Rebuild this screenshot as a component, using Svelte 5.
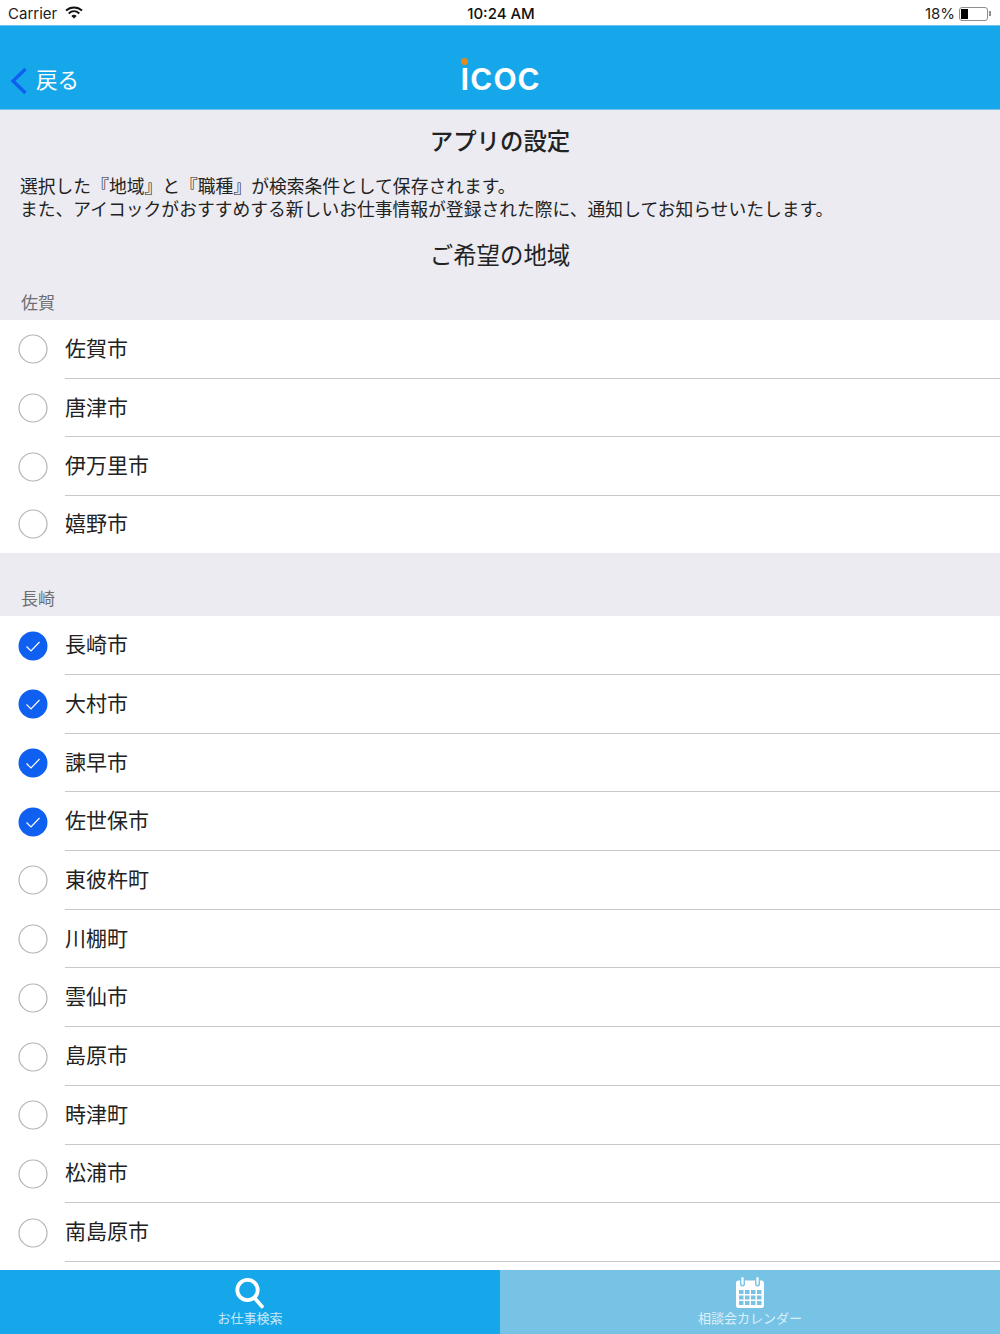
<script>
  const saga = [['佐賀市',false],['唐津市',false],['伊万里市',false],['嬉野市',false]];
  const nagasaki = [['長崎市',true],['大村市',true],['諫早市',true],['佐世保市',true],['東彼杵町',false],['川棚町',false],['雲仙市',false],['島原市',false],['時津町',false],['松浦市',false],['南島原市',false]];
  const groups = [{ name:'佐賀', rows:saga, last:false, cls:'saga' },{ name:'長崎', rows:nagasaki, last:true, cls:'naga' }];
</script>

<div class="page">
  <div class="status">
    <div class="st-left">
      <span>Carrier</span>
      <svg width="18" height="13" viewBox="0 0 18 13" class="wifi"><path d="M1 4.6C5.6.4 12.4.4 17 4.6" fill="none" stroke="#111" stroke-width="2"/><path d="M3.7 7.4c3.2-2.8 7.4-2.8 10.6 0" fill="none" stroke="#111" stroke-width="2"/><path d="M6.3 9.9c1.7-1.4 3.7-1.4 5.4 0L9 12.6z" fill="#111"/></svg>
    </div>
    <div class="st-time">10:24 AM</div>
    <div class="st-right">
      <span>18%</span>
      <span class="batt"><span class="fill"></span></span>
      <span class="nub"></span>
    </div>
  </div>

  <div class="nav">
    <div class="back">
      <svg width="18" height="28" viewBox="0 0 18 28"><path d="M15.5 2 3 14l12.5 12" fill="none" stroke="#0f5ff0" stroke-width="3.4"/></svg>
      <span>戻る</span>
    </div>
    <div class="logo"><span class="dot"></span>ıcoc</div>
  </div>

  <div class="content">
    <h1>アプリの設定</h1>
    <p class="intro">選択した『地域』と『職種』が検索条件として保存されます。<br>また、アイコックがおすすめする新しいお仕事情報が登録された際に、通知してお知らせいたします。</p>
    <h2>ご希望の地域</h2>

    {#each groups as g}
      <div class="sec {g.cls}">{g.name}</div>
      <ul class:tail={g.last}>
        {#each g.rows as [label, on], i}
          <li class:noline={!g.last && i === g.rows.length - 1}>
            {#if on}
              <svg class="radio" width="30" height="30" viewBox="0 0 30 30"><circle cx="15" cy="15" r="14.5" fill="#0f5ff0"/><path d="M8.5 15.5l4.5 4.5 8.5-9" fill="none" stroke="#fff" stroke-width="1.2"/></svg>
            {:else}
              <svg class="radio" width="30" height="30" viewBox="0 0 30 30"><circle cx="15" cy="15" r="14" fill="#fff" stroke="#b4b4b6" stroke-width="1.2"/></svg>
            {/if}
            <div class="label"><span>{label}</span></div>
          </li>
        {/each}
      </ul>
    {/each}
  </div>

  <div class="tabs">
    <div class="tab active">
      <svg width="32" height="32" viewBox="0 0 32 32"><circle cx="13.5" cy="13" r="10.2" fill="none" stroke="#fff" stroke-width="3.8"/><path d="M20.5 21 28 29.5" stroke="#fff" stroke-width="3.6" stroke-linecap="round"/></svg>
      <span>お仕事検索</span>
    </div>
    <div class="tab idle">
      <svg width="32" height="32" viewBox="0 0 32 32"><rect x="2" y="3.5" width="28" height="27.5" rx="2.5" fill="#fff"/><g fill="#76c3e6"><rect x="5" y="13" width="4.5" height="4"/><rect x="11" y="13" width="4.5" height="4"/><rect x="17" y="13" width="4.5" height="4"/><rect x="23" y="13" width="4.5" height="4"/><rect x="5" y="18.5" width="4.5" height="4"/><rect x="11" y="18.5" width="4.5" height="4"/><rect x="17" y="18.5" width="4.5" height="4"/><rect x="23" y="18.5" width="4.5" height="4"/><rect x="5" y="24" width="4.5" height="4"/><rect x="11" y="24" width="4.5" height="4"/><rect x="17" y="24" width="4.5" height="4"/><rect x="23" y="24" width="4.5" height="4"/><rect x="6" y="2" width="5" height="7.5" rx="2.5"/><rect x="21" y="2" width="5" height="7.5" rx="2.5"/></g><rect x="7.4" y="0" width="2.2" height="8" rx="1.1" fill="#fff"/><rect x="22.4" y="0" width="2.2" height="8" rx="1.1" fill="#fff"/></svg>
      <span>相談会カレンダー</span>
    </div>
  </div>
</div>

<style>
  :global(body) { margin: 0; }
  .page {
    width: 1000px; height: 1334px; display: flex; flex-direction: column; overflow: hidden;
    background: #ebebf1; color: #222;
    font-family: "Noto Sans CJK JP", "Liberation Sans", sans-serif;
  }
  .status {
    background: #fff; display: grid; grid-template-columns: 1fr auto 1fr; align-items: center;
    padding: 2px 8px 0 8px; box-sizing: border-box; font-family: "Inter", "Liberation Sans", sans-serif; font-size: 15px; color: #222;
    border-bottom: 1px solid #6fc0ea; height: 26px; flex: none;
  }
  .st-left { display: flex; align-items: center; gap: 8px; }
  .wifi { margin-top: -3px; }
  .st-time { font-weight: 500; color: #111; padding-left: 2px; }
  .st-right { display: flex; align-items: center; justify-content: flex-end; gap: 4px; }
  .batt { height: 14px; width: 29px; border: 1px solid #8e8e8e; border-radius: 3px; padding: 1px; display: block; box-sizing: border-box; }
  .fill { display: block; width: 7px; height: 100%; background: #000; }
  .nub { width: 2px; height: 5px; background: #8e8e8e; margin-left: -3px; margin-right: 1px; }

  .nav {
    height: 83px; background: #16a7ea; position: relative; display: flex; align-items: flex-end; justify-content: center;
    border-bottom: 1px solid #6fc0ea; flex: none;
  }
  .back { position: absolute; left: 10px; bottom: 14px; display: flex; align-items: center; gap: 8px; color: #fff; font-size: 21.5px; line-height: 28px; }
  .back svg { margin-top: 4px; }
  .logo {
    position: relative; color: #fff; font-family: "Inter", "Liberation Sans", sans-serif; font-weight: 500; font-size: 40px; line-height: 40px;
    margin-bottom: 13px;
  }
  .dot { position: absolute; left: 1px; top: 2px; width: 7px; height: 7px; border-radius: 50%; background: #e08a1e; }

  .content { flex: 1; min-height: 0; overflow: hidden; }
  h1, h2 { margin: 0; text-align: center; font-size: 23.4px; line-height: 32px; color: #222; }
  h1 { font-weight: 500; padding-top: 14px; }
  h2 { font-weight: 400; padding-top: 19px; }
  .intro { margin: 0; padding: 18px 20px 0; font-size: 17.8px; line-height: 22.5px; color: #222; white-space: nowrap; }
  .sec { padding-left: 21px; font-size: 17px; line-height: 24px; color: #6e6e72; }
  .saga { padding-top: 20px; padding-bottom: 6px; }
  .naga { padding-top: 33.4px; padding-bottom: 6.4px; }
  ul { margin: 0; padding: 0; list-style: none; background: #fff; }
  ul.tail { padding-bottom: 20px; }
  li { height: 58.7px; display: flex; align-items: center; padding-left: 18px; box-sizing: border-box; }
  li.noline { height: 56.5px; }
  .radio { flex: none; }
  .label { flex: 1; height: 100%; margin-left: 17px; display: flex; align-items: center; border-bottom: 1px solid #c8c8cc; box-sizing: border-box; font-size: 21px; color: #222; padding-bottom: 4px; }
  .noline .label { border-bottom: none; }

  .tabs { height: 64px; display: grid; grid-template-columns: 1fr 1fr; flex: none; }
  .tab { display: flex; flex-direction: column; align-items: center; color: #fff; font-size: 13px; line-height: 16px; padding-top: 7px; box-sizing: border-box; }
  .tab span { opacity: .75; margin-top: 1px; }
  .active { background: #16a7ea; }
  .idle { background: #76c3e6; }
</style>
